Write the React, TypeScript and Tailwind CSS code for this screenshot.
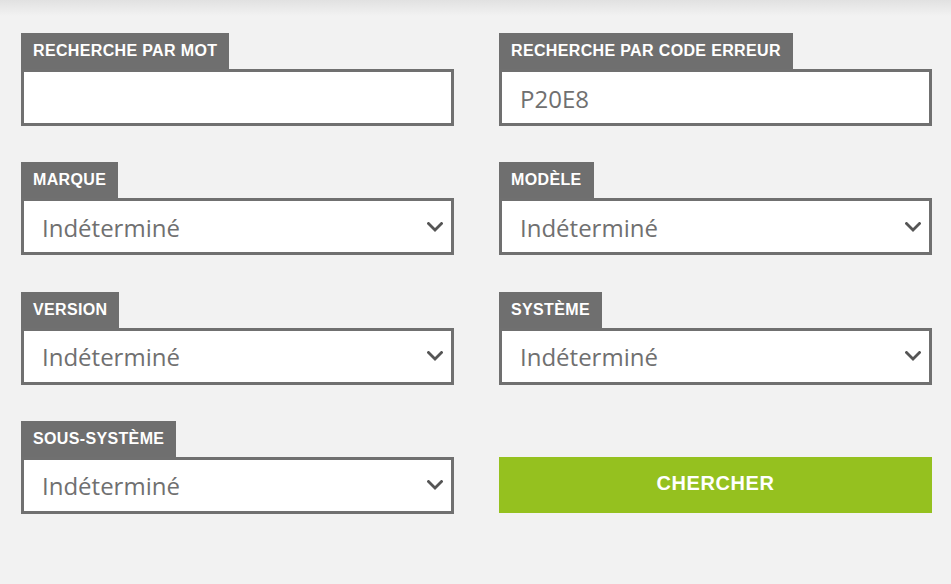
import React from "react";

function Chevron() {
  return (
    <svg width="16" height="10" viewBox="0 0 16 10" className="shrink-0">
      <polyline points="1.5,1.5 8,8 14.5,1.5" fill="none" stroke="#555555" strokeWidth="2.8" strokeLinecap="square" />
    </svg>
  );
}

function Field({ label, children }: { label: string; children: React.ReactNode }) {
  return (
    <div className="flex flex-col items-start">
      <div className="h-[36px] px-3 bg-[#6f6f6f] flex items-center text-white font-bold text-[16px] tracking-[0.35px] uppercase" style={{ fontFamily: '"Liberation Sans", Arial, sans-serif' }}>
        {label}
      </div>
      <div className="w-full h-[57px] border-[3px] border-[#707070] bg-white flex items-center pl-[18px] pr-[8px] text-[24px] text-[#707070]" style={{ fontFamily: '"Open Sans", sans-serif' }}>
        {children}
      </div>
    </div>
  );
}

function Select({ label }: { label: string }) {
  return (
    <Field label={label}>
      <span className="flex-1 pt-[2px]">Indéterminé</span>
      <Chevron />
    </Field>
  );
}

export default function App() {
  return (
    <div className="min-h-[584px] w-full bg-[linear-gradient(to_bottom,#e1e1e1,#f2f2f2_16px)] pt-[33px] pl-[21px] pr-[19px]">
      <div className="grid grid-cols-[433px_433px] gap-x-[45px] gap-y-[36.3px]">
        <Field label="Recherche par mot">
          <span></span>
        </Field>
        <Field label="Recherche par code erreur">
          <span className="pt-[2px]">P20E8</span>
        </Field>
        <Select label="Marque" />
        <Select label="Modèle" />
        <Select label="Version" />
        <Select label="Système" />
        <Select label="Sous-système" />
        <div className="self-end pb-[1px]">
          <button className="w-full h-[56px] bg-[#95c11f] text-white font-bold text-[20px] tracking-[0.6px] uppercase flex items-center justify-center pb-[4px]" style={{ fontFamily: '"Liberation Sans", Arial, sans-serif' }}>
            Chercher
          </button>
        </div>
      </div>
    </div>
  );
}
